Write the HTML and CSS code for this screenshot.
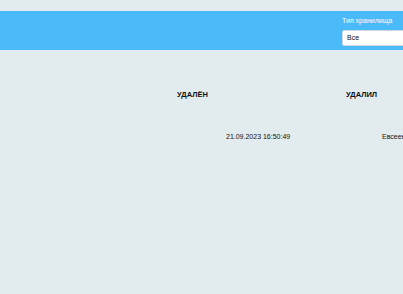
FILE: index.html
```html
<!DOCTYPE html>
<html lang="ru">
<head>
<meta charset="utf-8">
<link rel="stylesheet" href="styles.css">
</head>
<body>
<div class="page">
  <div class="toolbar">
    <div class="filter">
      <label class="filter-label">Тип хранилища</label>
      <div class="select">Все</div>
    </div>
  </div>
  <div class="table">
    <div class="row head">
      <div class="cell c1">УДАЛЁН</div>
      <div class="cell c2">УДАЛИЛ</div>
    </div>
    <div class="row body">
      <div class="cell c1 date">21.09.2023 16:50:49</div>
      <div class="cell c2 user">Евсеенко</div>
    </div>
  </div>
</div>
</body>
</html>
```
FILE: styles.css
```css
html, body {
  margin: 0;
  padding: 0;
  background: #e2ecee;
  overflow: hidden;
}
.page {
  width: 403px;
  height: 294px;
  padding-top: 11px;
  box-sizing: border-box;
  font-family: "Liberation Sans", Arial, sans-serif;
  color: #111;
  overflow: hidden;
}
.toolbar {
  height: 39px;
  background: #4bbaf9;
  display: flex;
  padding-left: 342px;
  box-sizing: border-box;
}
.filter {
  display: flex;
  flex-direction: column;
  padding-top: 5px;
  flex: 0 0 auto;
}
.filter-label {
  color: #fff;
  font-size: 7px;
  line-height: 9px;
  height: 13px;
  white-space: nowrap;
}
.select {
  width: 120px;
  height: 16px;
  margin-top: 1px;
  background: #fff;
  border: 1px solid #cfd8dc;
  border-radius: 2px;
  box-sizing: border-box;
  font-size: 7px;
  line-height: 14px;
  padding-left: 4px;
}
.table {
  display: flex;
  flex-direction: column;
}
.row {
  display: grid;
  grid-template-columns: 169px 1fr;
  padding-left: 177px;
  white-space: nowrap;
}
.head {
  padding-top: 40px;
  font-weight: bold;
  font-size: 7.5px;
  line-height: 10px;
}
.body {
  padding-top: 32px;
  font-size: 7px;
  line-height: 10px;
}
.date {
  padding-left: 49px;
}
.user {
  padding-left: 36px;
}
```
